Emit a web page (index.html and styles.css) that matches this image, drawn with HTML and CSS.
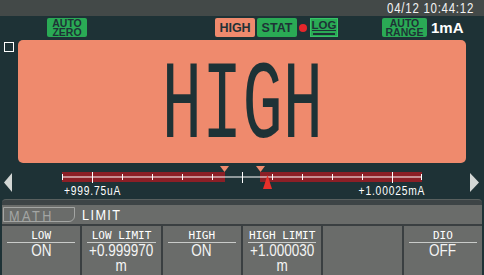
FILE: index.html
```html
<!DOCTYPE html>
<html lang="en">
<head>
    <meta charset="UTF-8">
    <title>Meter - Limit</title>
    <link rel="stylesheet" href="styles.css">
</head>
<body>

<div class="topbar">
    <span class="clock narrow">04/12 10:44:12</span>
</div>

<div class="status">
    <div class="badge two auto-zero"><span>AUTO</span><span>ZERO</span></div>
    <div class="badge high">HIGH</div>
    <div class="badge stat">STAT</div>
    <div class="rec-dot"></div>
    <div class="log">
        <span class="log-label">LOG</span>
        <span class="log-meter"><span class="log-fill"></span></span>
    </div>
    <div class="badge two auto-range"><span>AUTO</span><span>RANGE</span></div>
    <div class="range-value">1mA</div>
</div>

<div class="screen">
    <div class="marker-box"></div>
    <div class="display">
        <span class="reading">HIGH</span>
    </div>
</div>

<div class="scale">
    <svg class="arrow arrow-left" width="8" height="19" viewBox="0 0 8 19">
        <polygon points="8,0 0,9.5 8,19" fill="#d3d7d5"/>
    </svg>
    <div class="gauge">
        <svg class="gauge-bar" width="368" height="24" viewBox="0 0 368 24">
            <rect x="4" y="6" width="163" height="10" fill="#8c1f26"/>
            <rect x="202" y="6" width="162" height="10" fill="#8c1f26"/>
            <rect x="4" y="10.5" width="360" height="1" fill="#ffffff"/>
            <g stroke="#ffffff" stroke-width="1">
                <line x1="4.5" y1="8" x2="4.5" y2="14"/>
                <line x1="64.5" y1="8" x2="64.5" y2="14"/>
                <line x1="94.5" y1="8" x2="94.5" y2="14"/>
                <line x1="124.5" y1="8" x2="124.5" y2="14"/>
                <line x1="154.5" y1="8" x2="154.5" y2="14"/>
                <line x1="214.5" y1="8" x2="214.5" y2="14"/>
                <line x1="244.5" y1="8" x2="244.5" y2="14"/>
                <line x1="274.5" y1="8" x2="274.5" y2="14"/>
                <line x1="304.5" y1="8" x2="304.5" y2="14"/>
                <line x1="363.5" y1="8" x2="363.5" y2="14"/>
                <line x1="34.5" y1="6" x2="34.5" y2="17"/>
                <line x1="184.5" y1="6" x2="184.5" y2="17"/>
                <line x1="334.5" y1="6" x2="334.5" y2="17"/>
            </g>
            <polygon points="162,0 171,0 166.5,6" fill="#ef8a6d"/>
            <polygon points="198,0 207,0 202.5,6" fill="#ef8a6d"/>
            <polygon points="209.5,9 205,23 214,23" fill="#e8302a"/>
        </svg>
        <div class="gauge-labels">
            <span class="narrow from-left">+999.75uA</span>
            <span class="narrow from-right">+1.00025mA</span>
        </div>
    </div>
    <svg class="arrow arrow-right" width="9" height="19" viewBox="0 0 9 19">
        <polygon points="0,0 9,9.5 0,19" fill="#d3d7d5"/>
    </svg>
</div>

<div class="panel">
    <div class="panel-band"></div>
    <div class="tabs">
        <div class="tab tab-off"><span class="narrow from-left">MATH</span></div>
        <div class="tab tab-on"><span class="narrow from-left">LIMIT</span></div>
    </div>
    <div class="softkeys">
        <div class="key">
            <div class="key-title">LOW</div>
            <div class="key-value"><span class="narrow">ON</span></div>
        </div>
        <div class="key">
            <div class="key-title">LOW LIMIT</div>
            <div class="key-value"><span class="narrow">+0.999970<br>m</span></div>
        </div>
        <div class="key">
            <div class="key-title">HIGH</div>
            <div class="key-value"><span class="narrow">ON</span></div>
        </div>
        <div class="key">
            <div class="key-title">HIGH LIMIT</div>
            <div class="key-value"><span class="narrow">+1.000030<br>m</span></div>
        </div>
        <div class="key"></div>
        <div class="key">
            <div class="key-title">DIO</div>
            <div class="key-value"><span class="narrow">OFF</span></div>
        </div>
    </div>
</div>

</body>
</html>
```

FILE: styles.css
```css
:root {
    --bg-color: #1e3236;
    --bar-color: #434948;
    --salmon: #ef8a6d;
    --green: #2aaa55;
    --ink: #1e3236;
    --panel: #6a6c6a;
    --panel-line: #3a3f41;
    --sans: 'Liberation Sans', sans-serif;
}

*, *::before, *::after {
    box-sizing: border-box;
    margin: 0;
    padding: 0;
}

body {
    width: 484px;
    height: 275px;
    overflow: hidden;
    background-color: var(--bg-color);
    font-family: var(--sans);
    color: #ffffff;
}

/* Arial Narrow proportions from Liberation Sans */
.narrow {
    display: inline-block;
    transform: scaleX(0.82);
}

.from-left {
    transform-origin: left center;
}

.from-right {
    transform-origin: right center;
}

/* top clock bar */
.topbar {
    height: 16px;
    background-color: var(--bar-color);
    display: flex;
    justify-content: flex-end;
    align-items: center;
    padding-right: 10px;
}

.clock {
    font-size: 14px;
    line-height: 16px;
    letter-spacing: 0.9px;
    color: #f2f2f2;
    transform-origin: right center;
}

/* status badges */
.status {
    height: 24px;
    display: flex;
    align-items: flex-start;
    padding-top: 2px;
}

.badge {
    height: 19px;
    display: flex;
    align-items: center;
    justify-content: center;
    font-weight: bold;
    font-size: 12.5px;
    color: var(--ink);
    border-radius: 2px;
}

.badge.two {
    flex-direction: column;
    font-size: 10.5px;
    line-height: 9px;
}

.auto-zero {
    width: 40px;
    margin-left: 47px;
    background-color: var(--green);
}

.high {
    width: 40px;
    margin-left: 128px;
    background-color: var(--salmon);
}

.stat {
    width: 40px;
    margin-left: 2px;
    background-color: var(--green);
}

.rec-dot {
    width: 8px;
    height: 8px;
    margin: 6px 0 0 2px;
    border-radius: 50%;
    background-color: #e5262b;
}

.log {
    width: 28px;
    height: 19px;
    margin-left: 3px;
    padding: 1px 2px 2px;
    background-color: var(--green);
    border: 1px solid #36c467;
    display: flex;
    flex-direction: column;
    align-items: center;
}

.log-label {
    font-weight: bold;
    font-size: 11.5px;
    line-height: 10px;
    color: var(--ink);
    border-bottom: 1px solid var(--ink);
}

.log-meter {
    width: 22px;
    height: 4px;
    margin-top: 2px;
    background-color: var(--ink);
    padding: 1px;
    display: flex;
}

.log-fill {
    width: 11px;
    background-color: #22a5dd;
}

.auto-range {
    width: 45px;
    margin-left: 44px;
    background-color: var(--green);
}

.range-value {
    margin-left: 4px;
    font-weight: bold;
    font-size: 15px;
    line-height: 19px;
    color: #ffffff;
}

/* main reading */
.screen {
    display: flex;
    align-items: flex-start;
}

.marker-box {
    width: 10px;
    height: 10px;
    margin: 2px 0 0 4px;
    border: 1px solid #ffffff;
}

.display {
    width: 448px;
    height: 123px;
    margin-left: 4px;
    background-color: var(--salmon);
    border-radius: 5px;
    display: flex;
    align-items: center;
    justify-content: center;
}

.reading {
    margin-top: 12px;
    font-family: 'Liberation Mono', monospace;
    font-size: 112px;
    line-height: 1;
    color: var(--ink);
    transform: scaleX(0.6);
}

/* bar graph */
.scale {
    height: 33px;
    margin-top: 3px;
    display: flex;
    align-items: flex-start;
}

.arrow {
    margin-top: 7px;
    flex-shrink: 0;
}

.arrow-left {
    margin-left: 4px;
}

.gauge {
    width: 368px;
    margin-left: 46px;
}

.gauge-bar {
    display: block;
    overflow: visible;
}

.gauge-labels {
    display: flex;
    justify-content: space-between;
    margin-top: -4px;
    padding: 0 1px 0 6px;
    font-size: 12.5px;
    line-height: 11px;
    letter-spacing: 1px;
}

.arrow-right {
    margin-left: 44px;
}

/* soft key panel */
.panel {
    margin: 0 2px;
}

.panel-band {
    height: 6px;
    background-color: #3d4446;
    border-top: 1px solid #59605f;
    border-radius: 4px 4px 0 0;
}

.tabs {
    height: 19px;
    background-color: var(--panel);
    display: flex;
    align-items: flex-start;
}

.tab {
    font-size: 15.5px;
    line-height: 15px;
}

.tab-off {
    width: 72px;
    height: 15px;
    margin: 2px 0 0 1px;
    padding-left: 5px;
    border: 1px solid #a3a5a3;
    border-radius: 0 0 6px 0;
    color: #a3a5a3;
    letter-spacing: 3px;
}

.tab-on {
    margin: 2px 0 0 7px;
    color: #ffffff;
    letter-spacing: 1.7px;
}

.softkeys {
    display: grid;
    grid-template-columns: repeat(6, 1fr);
    gap: 2px;
    padding-top: 2px;
    height: 51px;
    background-color: var(--panel-line);
}

.key {
    background-color: var(--panel);
    padding-top: 4px;
    text-align: center;
}

.key-title {
    margin: 0 5px;
    height: 13px;
    font-family: 'DejaVu Sans Mono', monospace;
    font-size: 11px;
    line-height: 12px;
    border-bottom: 1px solid #c9cbc9;
}

.key-value {
    font-size: 16.5px;
    line-height: 15px;
    color: #f4f4f4;
}
```
